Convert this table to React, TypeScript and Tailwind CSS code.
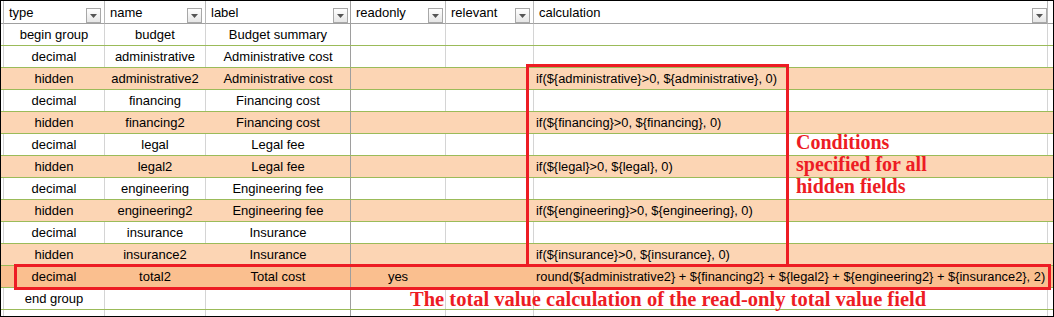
import React from "react";

type Row = {
  type: string;
  name: string;
  label: string;
  ro?: string;
  calc?: string;
  bg: "w" | "p" | "d";
};

const rows: Row[] = [
  { type: "begin group", name: "budget", label: "Budget summary", bg: "w" },
  { type: "decimal", name: "administrative", label: "Administrative cost", bg: "w" },
  { type: "hidden", name: "administrative2", label: "Administrative cost", calc: "if(${administrative}>0, ${administrative}, 0)", bg: "p" },
  { type: "decimal", name: "financing", label: "Financing cost", bg: "w" },
  { type: "hidden", name: "financing2", label: "Financing cost", calc: "if(${financing}>0, ${financing}, 0)", bg: "p" },
  { type: "decimal", name: "legal", label: "Legal fee", bg: "w" },
  { type: "hidden", name: "legal2", label: "Legal fee", calc: "if(${legal}>0, ${legal}, 0)", bg: "p" },
  { type: "decimal", name: "engineering", label: "Engineering fee", bg: "w" },
  { type: "hidden", name: "engineering2", label: "Engineering fee", calc: "if(${engineering}>0, ${engineering}, 0)", bg: "p" },
  { type: "decimal", name: "insurance", label: "Insurance", bg: "w" },
  { type: "hidden", name: "insurance2", label: "Insurance", calc: "if(${insurance}>0, ${insurance}, 0)", bg: "p" },
  { type: "decimal", name: "total2", label: "Total cost", ro: "yes", calc: "round(${administrative2} + ${financing2} + ${legal2} + ${engineering2} + ${insurance2}, 2)", bg: "d" },
  { type: "end group", name: "", label: "", bg: "w" },
];

const cols = "grid grid-cols-[3px_101px_101px_145px_95px_88px_514px_5px]";

function Drop() {
  return (
    <div className="w-[15px] h-[15px] border border-[#a8a8a8] bg-gradient-to-b from-white to-[#e6e6e6] flex items-center justify-center self-end shrink-0">
      <svg width="7" height="4" viewBox="0 0 7 4">
        <path d="M0 0 H7 L3.5 4 Z" fill="#555" />
      </svg>
    </div>
  );
}

function HeadCell({ text, gap, dark }: { text: string; gap: string; dark?: boolean }) {
  return (
    <div className={`flex items-stretch border-r ${dark ? "border-[#9e9e9e]" : "border-[#b8b8b8]"} border-b border-b-[#a0a0a0] h-[23px]`}>
      <div className="flex-1 self-center pl-[5px] pt-[1px] leading-[16px] truncate">{text}</div>
      <div className={gap + " flex self-end"}>
        <Drop />
      </div>
    </div>
  );
}

export default function App() {
  return (
    <div
      className="relative w-[1054px] h-[317px] bg-white border border-black overflow-hidden text-[13px] text-black"
      style={{ fontFamily: '"Liberation Sans", Arial, sans-serif' }}
    >
      <div className={cols}>
        <div className="border-r border-[#b8b8b8] border-b border-b-[#a0a0a0] h-[23px]" />
        <HeadCell text="type" gap="mr-[3px]" />
        <HeadCell text="name" gap="mr-[3px]" />
        <HeadCell text="label" gap="mr-[2px]" dark />
        <HeadCell text="readonly" gap="mr-[2px]" />
        <HeadCell text="relevant" gap="mr-[3px]" />
        <HeadCell text="calculation" gap="mr-0" />
        <div className="border-b border-b-[#a0a0a0] h-[23px]" />
      </div>
      {rows.map((r, i) => {
        const bg = r.bg === "p" ? "bg-[#fcd5b4]" : r.bg === "d" ? "bg-[#fabf8f]" : "bg-white";
        const vl = r.bg === "w" ? "border-[#d4d4d4]" : "border-transparent";
        return (
          <div key={i} className={`${cols} ${bg} h-[22px] border-b border-[#9bbb59]`}>
            <div className={`border-r ${vl}`} />
            <div className={`border-r ${vl} flex items-center justify-center`}>{r.type}</div>
            <div className={`border-r ${vl} flex items-center justify-center`}>{r.name}</div>
            <div className="border-r border-[#9e9e9e] flex items-center justify-center whitespace-nowrap">{r.label}</div>
            <div className={`border-r ${vl} flex items-center justify-center`}>{r.ro ?? ""}</div>
            <div className={`border-r ${vl}`} />
            <div className={`border-r ${vl} flex items-center pl-[2px] whitespace-nowrap text-[12.85px]`}>{r.calc ?? ""}</div>
            <div />
          </div>
        );
      })}
      <div className={`${cols} h-[8px]`}>
        <div className="border-r border-[#d4d4d4]" />
        <div className="border-r border-[#d4d4d4]" />
        <div className="border-r border-[#d4d4d4]" />
        <div className="border-r border-[#9e9e9e]" />
        <div className="border-r border-[#d4d4d4]" />
        <div className="border-r border-[#d4d4d4]" />
        <div className="border-r border-[#d4d4d4]" />
        <div />
      </div>

      {/* annotations */}
      <div className="absolute left-[525px] top-[63px] w-[263px] h-[203px] border-[3px] border-[#ed1c24]" />
      <div className="absolute left-[13px] top-[263px] w-[1037px] h-[26px] border-[3px] border-[#ed1c24]" />
      <div
        className="absolute left-[795px] top-[130px] text-[20px] leading-[22px] font-bold text-[#ed1c24]"
        style={{ fontFamily: '"Liberation Serif", "Times New Roman", serif' }}
      >
        <div>Conditions</div>
        <div>specified for all</div>
        <div>hidden fields</div>
      </div>
      <div
        className="absolute left-[409px] top-[287px] text-[20.5px] leading-[22px] font-bold text-[#ed1c24] whitespace-nowrap"
        style={{ fontFamily: '"Liberation Serif", "Times New Roman", serif' }}
      >
        The total value calculation of the read-only total value field
      </div>
    </div>
  );
}
